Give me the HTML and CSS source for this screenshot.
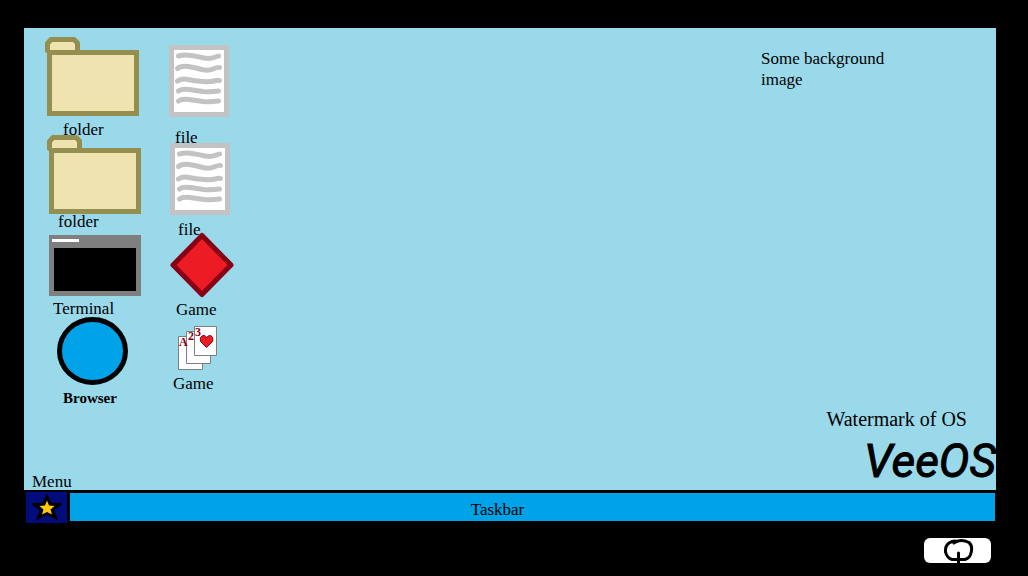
FILE: index.html
```html
<!DOCTYPE html>
<html lang="en">
<head>
<meta charset="utf-8">
<title>VeeOS</title>
<link rel="stylesheet" href="styles.css">
</head>
<body>
<svg class="symbols" aria-hidden="true">
  <symbol id="folder" viewBox="0 0 94 80">
    <path d="M2.500 14.500V7.500L6 3.500H29L32.500 7V16" fill="#efe4b0" stroke="#948f50" stroke-width="5" stroke-linejoin="round" stroke-linecap="round"/>
    <rect x="4.500" y="16.500" width="87" height="61" fill="#efe4b0" stroke="#948f50" stroke-width="5"/>
  </symbol>
  <symbol id="file" viewBox="0 0 60 72">
    <rect x="2.500" y="2.500" width="55" height="67" fill="#fff" stroke="#c3c3c3" stroke-width="5"/>
    <g fill="none" stroke="#c3c3c3" stroke-width="5" stroke-linecap="round" stroke-linejoin="round">
      <path d="M9.500 11Q15 9.500 22 10.500T35 13Q41 14 45 12.500T49.500 11"/>
      <path d="M8.500 23.500Q12 20.500 19 21.500T33 24.500Q39 26 44 24T50.500 22.500"/>
      <path d="M8.500 36Q13 33 19 34.500T34 36.500Q41 37 45 36T50.500 35.500"/>
      <path d="M9.500 46Q13 43.500 20 44.500T34 46.500Q42 47 49.500 46"/>
      <path d="M9.500 56Q13 53.500 20 54.500T34 56.500Q42 57 49.500 56"/>
    </g>
  </symbol>
</svg>
<div class="monitor">
  <main class="desktop">
    <button class="shortcut folder-one"><svg width="94" height="80"><use href="#folder"/></svg><span class="label">folder</span></button>
    <button class="shortcut folder-two"><svg width="94" height="80"><use href="#folder"/></svg><span class="label">folder</span></button>
    <button class="shortcut terminal">
      <svg width="92" height="61" viewBox="0 0 92 61"><path fill="#7f7f7f" d="M0 0h92v61H0z"/><path fill="#fff" d="M3 4h27v3H3z"/><path d="M5 13h82v43H5z"/></svg>
      <span class="label">Terminal</span>
    </button>
    <button class="shortcut browser">
      <svg width="71" height="68" viewBox="0 0 71 68"><ellipse cx="35.500" cy="34" rx="33" ry="31.500" fill="#00a2e8" stroke="#000" stroke-width="5"/></svg>
      <span class="label">Browser</span>
    </button>
    <button class="shortcut file-one"><svg width="60" height="72"><use href="#file"/></svg><span class="label">file</span></button>
    <button class="shortcut file-two"><svg width="60" height="72"><use href="#file"/></svg><span class="label">file</span></button>
    <button class="shortcut diamond">
      <svg width="64" height="66" viewBox="0 0 64 66"><path d="M32 3.500 61 33 32 62.500 3 33Z" fill="#ed1c24" stroke="#880015" stroke-width="5" stroke-linejoin="round"/></svg>
      <span class="label">Game</span>
    </button>
    <button class="shortcut cards">
      <svg width="39" height="44" viewBox="0 0 39 44">
        <g fill="#fff" stroke="#7f7f7f"><path d="M.5 10.500h24v33H.5z"/><path d="M8.500 5.500h24v32h-24z"/><path d="M16.500 .5h22v29h-22z"/></g>
        <g class="ranks"><text x="1" y="20">A</text><text x="10" y="14">2</text><text x="17" y="10">3</text></g>
        <path d="M28.500 21.500 22.500 15.500Q21.500 9.500 26 9.500 28 9.500 28.500 12 29.500 9.500 32 9.500 36 10.500 34.500 15.500Z" fill="#ed1c24" stroke="#880015"/>
      </svg>
      <span class="label">Game</span>
    </button>
    <p class="note">Some background image</p>
    <footer class="desktop-foot">
      <label class="menu-label" for="menu">Menu</label>
      <div class="brand">
        <p class="watermark">Watermark of OS</p>
        <p class="logo">VeeOS</p>
      </div>
    </footer>
  </main>
  <nav class="taskbar">
    <button class="menu" id="menu">
      <svg width="30" height="28" viewBox="0 0 30 28" aria-hidden="true">
        <path d="M15 4 18 10.500 26 11 20 15.500 22.500 22.500 15 18.500 7.500 22.500 10 15.500 4 11 12 10.500Z" fill="#ffc90e" stroke="#000" stroke-width="4"/>
        <path d="M15 6.500 17 11.500 22.500 12 18.500 15.500 20 20.500 15 18 10 20.500 11.500 15.500 7.500 12 13 11.500Z" fill="#ffc90e"/>
      </svg>
    </button>
    <span class="taskbar-title">Taskbar</span>
  </nav>
  <button class="power" aria-label="Power">
    <svg width="32" height="25" viewBox="0 0 32 25" fill="none" stroke="#000" stroke-width="3" stroke-linecap="round">
      <path d="M15 3.500Q12 2 7 5 3 8 3.500 14 5 20 10 21.500H23Q28 20 29 15 31 8 27 4.500 21 1.500 16 3L12 5"/><path d="M16.500 15V25"/>
    </svg>
  </button>
</div>
</body>
</html>
```
FILE: styles.css
```css
* { box-sizing: border-box; }
body {
  margin: 0;
  background: #000;
  color: #000;
  font: 17px/22px "Liberation Serif", serif;
}
button {
  padding: 0;
  border: 0;
  background: none;
  color: inherit;
  font: inherit;
  cursor: pointer;
}
p { margin: 0; }
svg { display: block; }
.symbols { position: absolute; width: 0; height: 0; }

.monitor {
  display: flex;
  flex-direction: column;
  min-height: 100vh;
  padding: 28px 32px 13px 24px;
}
.desktop {
  position: relative;
  flex: 1;
  display: flex;
  flex-direction: column;
  justify-content: space-between;
  background: #99d9ea;
}

/* Shortcuts sit freely on the desktop */
.shortcut {
  position: absolute;
  display: flex;
  flex-direction: column;
  align-items: flex-start;
}
.folder-one { left: 21px; top: 8px; gap: 3px; }
.folder-one .label { padding-left: 18px; }
.folder-two { left: 23px; top: 106px; }
.folder-two .label { padding-left: 11px; margin-top: -3px; }
.terminal { left: 25px; top: 207px; gap: 2px; }
.terminal .label { padding-left: 4px; }
.browser { left: 33px; top: 289px; gap: 2px; }
.browser .label { padding-left: 6px; font-size: 15px; font-weight: bold; }
.file-one { left: 145px; top: 17px; gap: 10px; }
.file-one .label { padding-left: 6px; }
.file-two { left: 146px; top: 115px; gap: 4px; }
.file-two .label { padding-left: 8px; }
.diamond { left: 146px; top: 204px; gap: 1px; }
.diamond .label { padding-left: 6px; }
.cards { left: 149px; top: 298px; gap: 3px; }
.cards svg { margin-left: 5px; overflow: visible; }
.ranks { font: bold 12px "Liberation Serif", serif; fill: #880015; }

.note {
  align-self: flex-end;
  width: 140px;
  margin: 20px 95px 0 0;
  line-height: 21px;
}
.desktop-foot {
  display: flex;
  justify-content: space-between;
  align-items: flex-end;
}
.menu-label { padding-left: 8px; line-height: 16px; }
.brand { text-align: right; }
.watermark { padding-right: 29px; font-size: 20px; line-height: 26px; }
.logo {
  font: italic 400 46px/58px Roboto, sans-serif;
  -webkit-text-stroke: 1px #000;
}

.taskbar {
  display: flex;
  height: 31px;
  margin-right: 1px;
  border-top: 3px solid #000;
  background: #00a2e8;
}
.menu {
  display: flex;
  align-items: center;
  justify-content: center;
  width: 46px;
  height: 36px;
  margin-top: -4px;
  border: solid #000;
  border-width: 3px 3px 2px 2px;
  background: #000c7b;
}
.taskbar-title {
  flex: 1;
  padding: 6px 70px 0 0;
  text-align: center;
}
.power {
  align-self: flex-end;
  display: flex;
  justify-content: center;
  width: 67px;
  margin: 17px 5px 0 0;
  border-radius: 6px;
  background: #fff;
}
```
